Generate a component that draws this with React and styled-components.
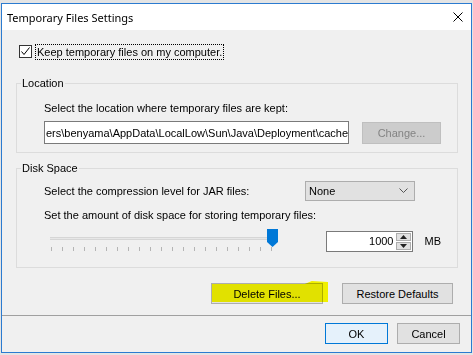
import styled, { createGlobalStyle } from 'styled-components';

const GlobalStyle = createGlobalStyle`
  html, body {
    margin: 0;
    padding: 0;
    background: #e4e4e4;
  }
  body {
    font-family: 'Liberation Sans', Arial, sans-serif;
    font-size: 11px;
    color: #000;
  }
`;

const Window = styled.div`
  box-sizing: border-box;
  margin: 3px 0 0 1px;
  width: 471px;
  height: 350px;
  border: 1px solid #2b7bd0;
  background: #f0f0f0;
  display: flex;
  flex-direction: column;
`;

const TitleBar = styled.div`
  height: 26px;
  background: #fff;
  display: flex;
  align-items: center;
  justify-content: space-between;
  padding: 0 8px 0 5px;
  font-family: 'Noto Sans', 'Liberation Sans', sans-serif;
  font-size: 11px;
`;

const Content = styled.div`
  display: flex;
  flex-direction: column;
  padding: 0 13px 0 14px;
`;

const CheckRow = styled.label`
  display: flex;
  align-items: center;
  margin: 14px 0 0 3px;
  height: 15px;
  gap: 4px;
`;

const Box = styled.span`
  box-sizing: border-box;
  width: 13px;
  height: 13px;
  border: 1px solid #333;
  background: #fff;
  display: flex;
  align-items: center;
  justify-content: center;
`;

const FocusLabel = styled.span`
  outline: 1px dotted #000;
  outline-offset: 0;
  padding: 0 1px;
  line-height: 14px;
`;

const Group = styled.fieldset`
  margin: ${({ $top }) => $top}px 0 0;
  border: 1px solid #dcdcdc;
  padding: ${({ $pad }) => $pad};
  min-width: 0;
`;

const Legend = styled.legend`
  padding: 0 1px;
  margin-left: -23px;
  line-height: 14px;
`;

const Text = styled.div`
  line-height: 14px;
  margin-top: ${({ $top = 0 }) => $top}px;
  width: ${({ $w }) => ($w ? `${$w}px` : 'auto')};
`;

const Row = styled.div`
  display: flex;
  align-items: center;
  margin-top: ${({ $top = 0 }) => $top}px;
`;

const PathField = styled.div`
  box-sizing: border-box;
  width: 305px;
  height: 23px;
  border: 1px solid #7a7a7a;
  background: #fff;
  display: flex;
  align-items: center;
  white-space: nowrap;
  padding-left: 1px;
`;

const Button = styled.button`
  box-sizing: border-box;
  width: ${({ $w }) => $w}px;
  height: ${({ $h = 21 }) => $h}px;
  margin-left: ${({ $ml = 0 }) => $ml}px;
  font: inherit;
  padding: 0;
  position: relative;
  color: ${({ disabled }) => (disabled ? '#838383' : '#000')};
  background: ${({ disabled, $primary }) =>
    disabled ? '#cccccc' : $primary ? '#e5f1fb' : '#e1e1e1'};
  border: 1px solid
    ${({ disabled, $primary }) =>
      disabled ? '#bfbfbf' : $primary ? '#0078d7' : '#adadad'};
`;

const HighlightButton = styled(Button)`
  &::after {
    content: '';
    position: absolute;
    left: 0;
    right: -6px;
    top: -3px;
    bottom: 1px;
    background: #ffff00;
    mix-blend-mode: multiply;
    clip-path: polygon(0 3px, 80% 3px, 86% 0, 100% 1px, 100% 100%, 20% 100%, 12% calc(100% + 1px), 0 100%);
    pointer-events: none;
  }
`;

const Select = styled.div`
  box-sizing: border-box;
  width: 110px;
  height: 20px;
  border: 1px solid #adadad;
  background: #e1e1e1;
  display: flex;
  align-items: center;
  justify-content: space-between;
  padding: 0 6px 0 3px;
`;

const Slider = styled.div`
  position: relative;
  width: 232px;
  height: 24px;
  margin-left: 6px;
`;

const Track = styled.div`
  position: absolute;
  left: 0;
  right: 6px;
  top: 8px;
  height: 3px;
  background: #e7e7e7;
  border-top: 1px solid #d6d6d6;
  border-bottom: 1px solid #d6d6d6;
  box-sizing: border-box;
`;

const Ticks = styled.div`
  position: absolute;
  left: 1px;
  right: 8px;
  top: 18px;
  height: 4px;
  display: flex;
  justify-content: space-between;
`;

const Tick = styled.span`
  width: 1px;
  height: 4px;
  background: #b4b4b4;
`;

const Thumb = styled.svg`
  position: absolute;
  right: 2px;
  top: 0;
`;

const Spin = styled.div`
  box-sizing: border-box;
  width: 87px;
  height: 21px;
  margin-left: 46px;
  border: 1px solid #7a7a7a;
  background: #fff;
  display: flex;
  align-items: center;
  justify-content: flex-end;
`;

const SpinValue = styled.span`
  padding-right: 2px;
`;

const SpinButtons = styled.div`
  width: 15px;
  height: 17px;
  margin-right: 1px;
  display: flex;
  flex-direction: column;
  gap: 1px;
`;

const SpinHalf = styled.div`
  flex: 1;
  background: #e1e1e1;
  border: 1px solid #adadad;
  display: flex;
  align-items: center;
  justify-content: center;
`;

const Unit = styled.span`
  margin-left: 12px;
`;

const ButtonRow = styled.div`
  display: flex;
  justify-content: flex-end;
  margin: ${({ $top }) => $top}px ${({ $right }) => $right}px 0 0;
`;

const Separator = styled.div`
  height: 1px;
  background: #a0a0a0;
  margin-top: 11px;
`;

const ticks = Array.from({ length: 21 });

export default function App() {
  return (
    <>
      <GlobalStyle />
      <Window>
        <TitleBar>
          <span>Temporary Files Settings</span>
          <svg width="10" height="10" viewBox="0 0 10 10">
            <path d="M0.5 0.5 L9.5 9.5 M9.5 0.5 L0.5 9.5" stroke="#000" strokeWidth="1" />
          </svg>
        </TitleBar>
        <Content>
          <CheckRow>
            <Box>
              <svg width="11" height="11" viewBox="0 0 11 11">
                <path d="M1.5 5.5 L4 8.5 L9.5 1.5" fill="none" stroke="#000" strokeWidth="1" />
              </svg>
            </Box>
            <FocusLabel>Keep temporary files on my computer.</FocusLabel>
          </CheckRow>

          <Group $top={17} $pad="11px 16px 8px 27px">
            <Legend>Location</Legend>
            <Text>Select the location where temporary files are kept:</Text>
            <Row $top={6}>
              <PathField>ers\benyama\AppData\LocalLow\Sun\Java\Deployment\cache</PathField>
              <Button $w={79} $h={22} $ml={13} disabled>
                Change...
              </Button>
            </Row>
          </Group>

          <Group $top={8} $pad="6px 16px 14px 27px">
            <Legend>Disk Space</Legend>
            <Row>
              <Text $w={261}>Select the compression level for JAR files:</Text>
              <Select>
                <span>None</span>
                <svg width="9" height="6" viewBox="0 0 9 6">
                  <path d="M0.5 0.5 L4.5 4.5 L8.5 0.5" fill="none" stroke="#555" strokeWidth="1" />
                </svg>
              </Select>
            </Row>
            <Text $top={7}>Set the amount of disk space for storing temporary files:</Text>
            <Row $top={7}>
              <Slider>
                <Track />
                <Ticks>
                  {ticks.map((_, i) => (
                    <Tick key={i} />
                  ))}
                </Ticks>
                <Thumb width="11" height="18" viewBox="0 0 11 18">
                  <path d="M0 0 H11 V13 L5.5 18 L0 13 Z" fill="#0078d7" />
                </Thumb>
              </Slider>
              <Spin>
                <SpinValue>1000</SpinValue>
                <SpinButtons>
                  <SpinHalf>
                    <svg width="7" height="4" viewBox="0 0 7 4">
                      <path d="M0 4 L3.5 0 L7 4 Z" fill="#222" />
                    </svg>
                  </SpinHalf>
                  <SpinHalf>
                    <svg width="7" height="4" viewBox="0 0 7 4">
                      <path d="M0 0 L3.5 4 L7 0 Z" fill="#222" />
                    </svg>
                  </SpinHalf>
                </SpinButtons>
              </Spin>
              <Unit>MB</Unit>
            </Row>
          </Group>

          <ButtonRow $top={15} $right={5}>
            <HighlightButton $w={112}>Delete Files...</HighlightButton>
            <Button $w={111} $ml={19}>
              Restore Defaults
            </Button>
          </ButtonRow>
        </Content>
        <Separator />
        <ButtonRow $top={7} $right={11}>
          <Button $w={63} $primary>
            OK
          </Button>
          <Button $w={63} $ml={9}>
            Cancel
          </Button>
        </ButtonRow>
      </Window>
    </>
  );
}
